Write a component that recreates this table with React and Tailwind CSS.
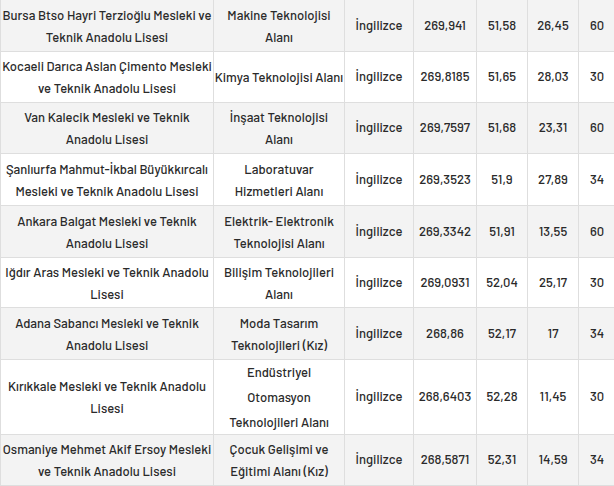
const rows = [
  { h: 'h-[52px]', bg: 'bg-[#f3f3f3]', school: ['Bursa Btso Hayri Terzioğlu Mesleki ve', 'Teknik Anadolu Lisesi'], field: ['Makine Teknolojisi', 'Alanı'], score: '269,941', a: '51,58', b: '26,45', q: '60' },
  { h: 'h-[51px]', bg: 'bg-white', school: ['Kocaeli Darıca Aslan Çimento Mesleki', 've Teknik Anadolu Lisesi'], field: ['Kimya Teknolojisi Alanı'], score: '269,8185', a: '51,65', b: '28,03', q: '30' },
  { h: 'h-[51px]', bg: 'bg-[#f3f3f3]', school: ['Van Kalecik Mesleki ve Teknik', 'Anadolu Lisesi'], field: ['İnşaat Teknolojisi', 'Alanı'], score: '269,7597', a: '51,68', b: '23,31', q: '60' },
  { h: 'h-[52px]', bg: 'bg-white', school: ['Şanlıurfa Mahmut-İkbal Büyükkırcalı', 'Mesleki ve Teknik Anadolu Lisesi'], field: ['Laboratuvar', 'Hizmetleri Alanı'], score: '269,3523', a: '51,9', b: '27,89', q: '34' },
  { h: 'h-[52px]', bg: 'bg-[#f3f3f3]', school: ['Ankara Balgat Mesleki ve Teknik', 'Anadolu Lisesi'], field: ['Elektrik- Elektronik', 'Teknolojisi Alanı'], score: '269,3342', a: '51,91', b: '13,55', q: '60' },
  { h: 'h-[50px]', bg: 'bg-white', school: ['Iğdır Aras Mesleki ve Teknik Anadolu', 'Lisesi'], field: ['Bilişim Teknolojileri', 'Alanı'], score: '269,0931', a: '52,04', b: '25,17', q: '30' },
  { h: 'h-[52px]', bg: 'bg-[#f3f3f3]', school: ['Adana Sabancı Mesleki ve Teknik', 'Anadolu Lisesi'], field: ['Moda Tasarım', 'Teknolojileri (Kız)'], score: '268,86', a: '52,17', b: '17', q: '34' },
  { h: 'h-[75px]', bg: 'bg-white', school: ['Kırıkkale Mesleki ve Teknik Anadolu', 'Lisesi'], field: ['Endüstriyel', 'Otomasyon', 'Teknolojileri Alanı'], score: '268,6403', a: '52,28', b: '11,45', q: '30', tall: true },
  { h: 'h-[51px]', bg: 'bg-[#f3f3f3]', school: ['Osmaniye Mehmet Akif Ersoy Mesleki', 've Teknik Anadolu Lisesi'], field: ['Çocuk Gelişimi ve', 'Eğitimi Alanı (Kız)'], score: '268,5871', a: '52,31', b: '14,59', q: '34' },
];

function Lines({ lines, lh }) {
  return (
    <div className={lh}>
      {lines.map((l, i) => (
        <div key={i} className="whitespace-nowrap">{l}</div>
      ))}
    </div>
  );
}

const cell = 'flex items-center justify-center text-center border-r border-b border-[#dedede] overflow-hidden';

export default function App() {
  return (
    <div
      className="w-[614px] h-[486px] overflow-hidden bg-white text-[13px] font-medium text-[#2a2a2a]"
      style={{ fontFamily: 'Barlow, "Roboto Condensed", "Liberation Sans", sans-serif' }}
    >
      <div className="w-[616px] border-l border-[#dedede]">
        {rows.map((r, i) => (
          <div key={i} className={`grid grid-cols-[213px_131px_69px_63px_51px_51px_37px] ${r.h} ${r.bg}`}>
            <div className={cell}><Lines lines={r.school} lh="leading-[22px]" /></div>
            <div className={cell}><Lines lines={r.field} lh={r.tall ? 'leading-[25px]' : 'leading-[22px]'} /></div>
            <div className={cell}>İngilizce</div>
            <div className={cell}>{r.score}</div>
            <div className={cell}>{r.a}</div>
            <div className={cell}>{r.b}</div>
            <div className={cell}>{r.q}</div>
          </div>
        ))}
      </div>
    </div>
  );
}
